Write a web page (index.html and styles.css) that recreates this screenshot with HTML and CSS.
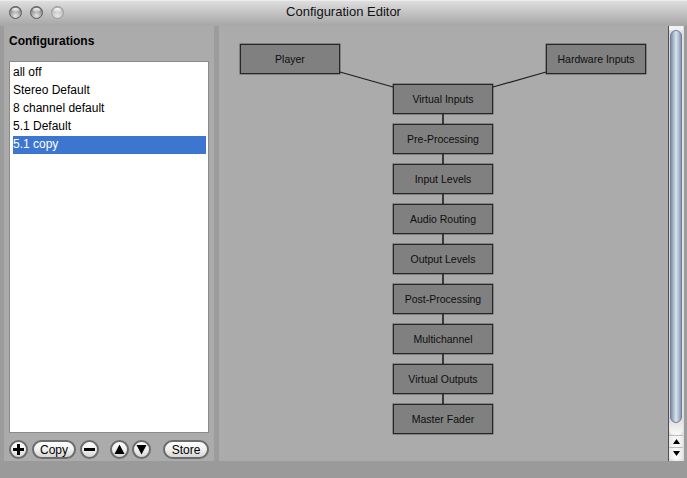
FILE: index.html
```html
<!DOCTYPE html>
<html>
<head>
<meta charset="utf-8">
<link rel="stylesheet" href="styles.css">
</head>
<body>
<div class="window">
  <div class="titlebar">
    <div class="lights">
      <span class="light"></span>
      <span class="light light-2"></span>
      <span class="light light-off"></span>
    </div>
    <div class="title">Configuration Editor</div>
  </div>
  <div class="main">
    <div class="left">
      <div class="heading">Configurations</div>
      <ul class="list">
        <li class="row">all off</li>
        <li class="row">Stereo Default</li>
        <li class="row">8 channel default</li>
        <li class="row">5.1 Default</li>
        <li class="row selected">5.1 copy</li>
      </ul>
      <div class="buttons">
        <span class="btn round b-plus"><svg width="11" height="11" viewBox="0 0 11 11"><rect x="4" y="0" width="3" height="11" fill="#000"/><rect x="0" y="4" width="11" height="3" fill="#000"/></svg></span>
        <span class="btn pill b-copy">Copy</span>
        <span class="btn round b-minus"><svg width="11" height="11" viewBox="0 0 11 11"><rect x="0" y="4" width="11" height="3" fill="#000"/></svg></span>
        <span class="btn round b-up"><svg width="11" height="11" viewBox="0 0 11 11"><polygon points="5.5,0.5 10.5,10 0.5,10" fill="#000"/></svg></span>
        <span class="btn round b-down"><svg width="11" height="11" viewBox="0 0 11 11"><polygon points="0.5,1 10.5,1 5.5,10.5" fill="#000"/></svg></span>
        <span class="btn pill b-store">Store</span>
      </div>
    </div>
    <div class="right">
      <div class="canvas">
        <svg class="wires" width="449" height="435" viewBox="0 0 449 435">
          <line x1="121" y1="46" x2="174" y2="61" stroke="#1e1e1e" stroke-width="1.2"/>
          <line x1="327" y1="46" x2="274" y2="61" stroke="#1e1e1e" stroke-width="1.2"/>
          <line x1="224" y1="88" x2="224" y2="380" stroke="#1e1e1e" stroke-width="1.6"/>
        </svg>
        <div class="node" style="left:21px;top:18px">Player</div>
        <div class="node" style="left:327px;top:18px">Hardware Inputs</div>
        <div class="node" style="left:174px;top:58px">Virtual Inputs</div>
        <div class="node" style="left:174px;top:98px">Pre-Processing</div>
        <div class="node" style="left:174px;top:138px">Input Levels</div>
        <div class="node" style="left:174px;top:178px">Audio Routing</div>
        <div class="node" style="left:174px;top:218px">Output Levels</div>
        <div class="node" style="left:174px;top:258px">Post-Processing</div>
        <div class="node" style="left:174px;top:298px">Multichannel</div>
        <div class="node" style="left:174px;top:338px">Virtual Outputs</div>
        <div class="node" style="left:174px;top:378px">Master Fader</div>
      </div>
      <div class="scrollbar">
        <div class="sb-cap"></div>
        <div class="thumb"></div>
        <div class="sb-gap"></div>
        <div class="arrow"><svg width="7" height="5" viewBox="0 0 7 5"><polygon points="3.5,0 7,5 0,5" fill="#000"/></svg></div>
        <div class="arrow arrow-down"><svg width="7" height="5" viewBox="0 0 7 5"><polygon points="0,0 7,0 3.5,5" fill="#000"/></svg></div>
      </div>
    </div>
  </div>
  <div class="bottom"></div>
</div>
</body>
</html>
```
FILE: styles.css
```css
* { box-sizing: border-box; }
html, body { margin: 0; padding: 0; }
body {
  width: 687px;
  height: 478px;
  overflow: hidden;
  background: #9c9c9c;
  font-family: "Liberation Sans", Arial, sans-serif;
}
.window {
  width: 687px;
  height: 478px;
  display: flex;
  flex-direction: column;
  background: #9c9c9c;
}
.titlebar {
  height: 26px;
  flex: none;
  position: relative;
  background: linear-gradient(#dedede 0%, #c4c4c4 45%, #a6a6a6 100%);
  border-top: 1px solid #ececec;
  display: flex;
  align-items: center;
}
.lights {
  display: flex;
  align-items: center;
  padding-left: 9px;
  gap: 7px;
  margin-top: -3px;
}
.light {
  width: 13px;
  height: 13px;
  border-radius: 50%;
  border: 1px solid #5a5a5a;
  background: radial-gradient(circle at 50% 80%, #e8e8e8 0%, #a8a8a8 45%, #6e6e6e 100%);
  position: relative;
}
.light::after {
  content: "";
  position: absolute;
  left: 2px;
  top: 1px;
  width: 7px;
  height: 4px;
  border-radius: 50%;
  background: linear-gradient(#ffffff, rgba(255,255,255,0.2));
}
.light-2 { margin-left: 1px; }
.light-off {
  margin-left: 1px;
  border-color: #9a9a9a;
  background: radial-gradient(circle at 50% 80%, #e6e6e6 0%, #c8c8c8 50%, #a8a8a8 100%);
}
.title {
  position: absolute;
  left: 0;
  right: 0;
  top: 3px;
  text-align: center;
  font-size: 13px;
  color: #111;
  line-height: 16px;
}
.main {
  height: 435px;
  flex: none;
  display: flex;
  padding-left: 4px;
  gap: 5px;
}
.left {
  width: 210px;
  background: #ababab;
  display: flex;
  flex-direction: column;
  padding: 8px 5px 0 5px;
}
.heading {
  font-weight: bold;
  font-size: 12px;
  line-height: 14px;
  height: 14px;
  color: #000;
  margin-bottom: 13px;
}
.list {
  list-style: none;
  margin: 0;
  width: 200px;
  height: 372px;
  background: #fff;
  border: 1px solid #8a8a8a;
  padding: 2px 2px 0 3px;
}
.row {
  height: 18px;
  font-size: 12px;
  line-height: 16px;
  padding-bottom: 2px;
  color: #000;
  white-space: nowrap;
}
.row.selected {
  background: #3d76d0;
  color: #fff;
}
.buttons {
  display: flex;
  align-items: center;
  margin-top: 7px;
  height: 19px;
}
.btn {
  height: 19px;
  border: 2px solid #6c6c6c;
  border-radius: 10px;
  background: linear-gradient(#ffffff 0%, #f0f0f0 50%, #d6d6d6 100%);
  display: flex;
  align-items: center;
  justify-content: center;
  font-size: 12px;
  color: #000;
}
.round { width: 19px; padding: 0; }
.pill { padding: 0; }
.b-copy { width: 44px; margin-left: 4px; }
.b-minus { margin-left: 4px; }
.b-up { margin-left: 11px; }
.b-down { margin-left: 3px; }
.b-store { width: 46px; margin-left: 12px; }
.right {
  width: 465px;
  background: #ababab;
  display: flex;
}
.canvas {
  position: relative;
  width: 449px;
  height: 435px;
  flex: none;
}
.wires { position: absolute; left: 0; top: 0; }
.node {
  position: absolute;
  width: 100px;
  height: 30px;
  background: #808080;
  border: 1px solid #262626;
  box-shadow: 0 0 0 0.5px rgba(30,30,30,0.6);
  font-size: 10.5px;
  line-height: 29px;
  text-align: center;
  color: #0e0e0e;
  white-space: nowrap;
}
.scrollbar {
  width: 16px;
  flex: none;
  border-left: 1px solid #4e4e4e;
  background: linear-gradient(90deg, #d8d8d8, #f4f4f4 50%, #dcdcdc);
  display: flex;
  flex-direction: column;
  padding-right: 1px;
}
.sb-cap {
  height: 4px;
  background: #f2f2f2;
}
.thumb {
  height: 393px;
  margin: 0 1px 0 1px;
  border-radius: 6px;
  border: 1px solid #6f7f98;
  background: linear-gradient(90deg, #7f90aa 0%, #aab8cc 25%, #dbe4ef 50%, #b3c0d2 75%, #8495ae 100%);
}
.sb-gap {
  height: 12px;
  background: linear-gradient(#e4e4e4, #fafafa);
  border-radius: 0 0 6px 6px;
}
.arrow {
  height: 12px;
  display: flex;
  align-items: center;
  justify-content: center;
  background: linear-gradient(90deg, #e8e8e8, #fdfdfd 50%, #e8e8e8);
  border-top: 1px solid #bdbdbd;
}
.arrow-down { height: 12px; }
.bottom {
  flex: 1;
  background: #9a9a9a;
}
```
